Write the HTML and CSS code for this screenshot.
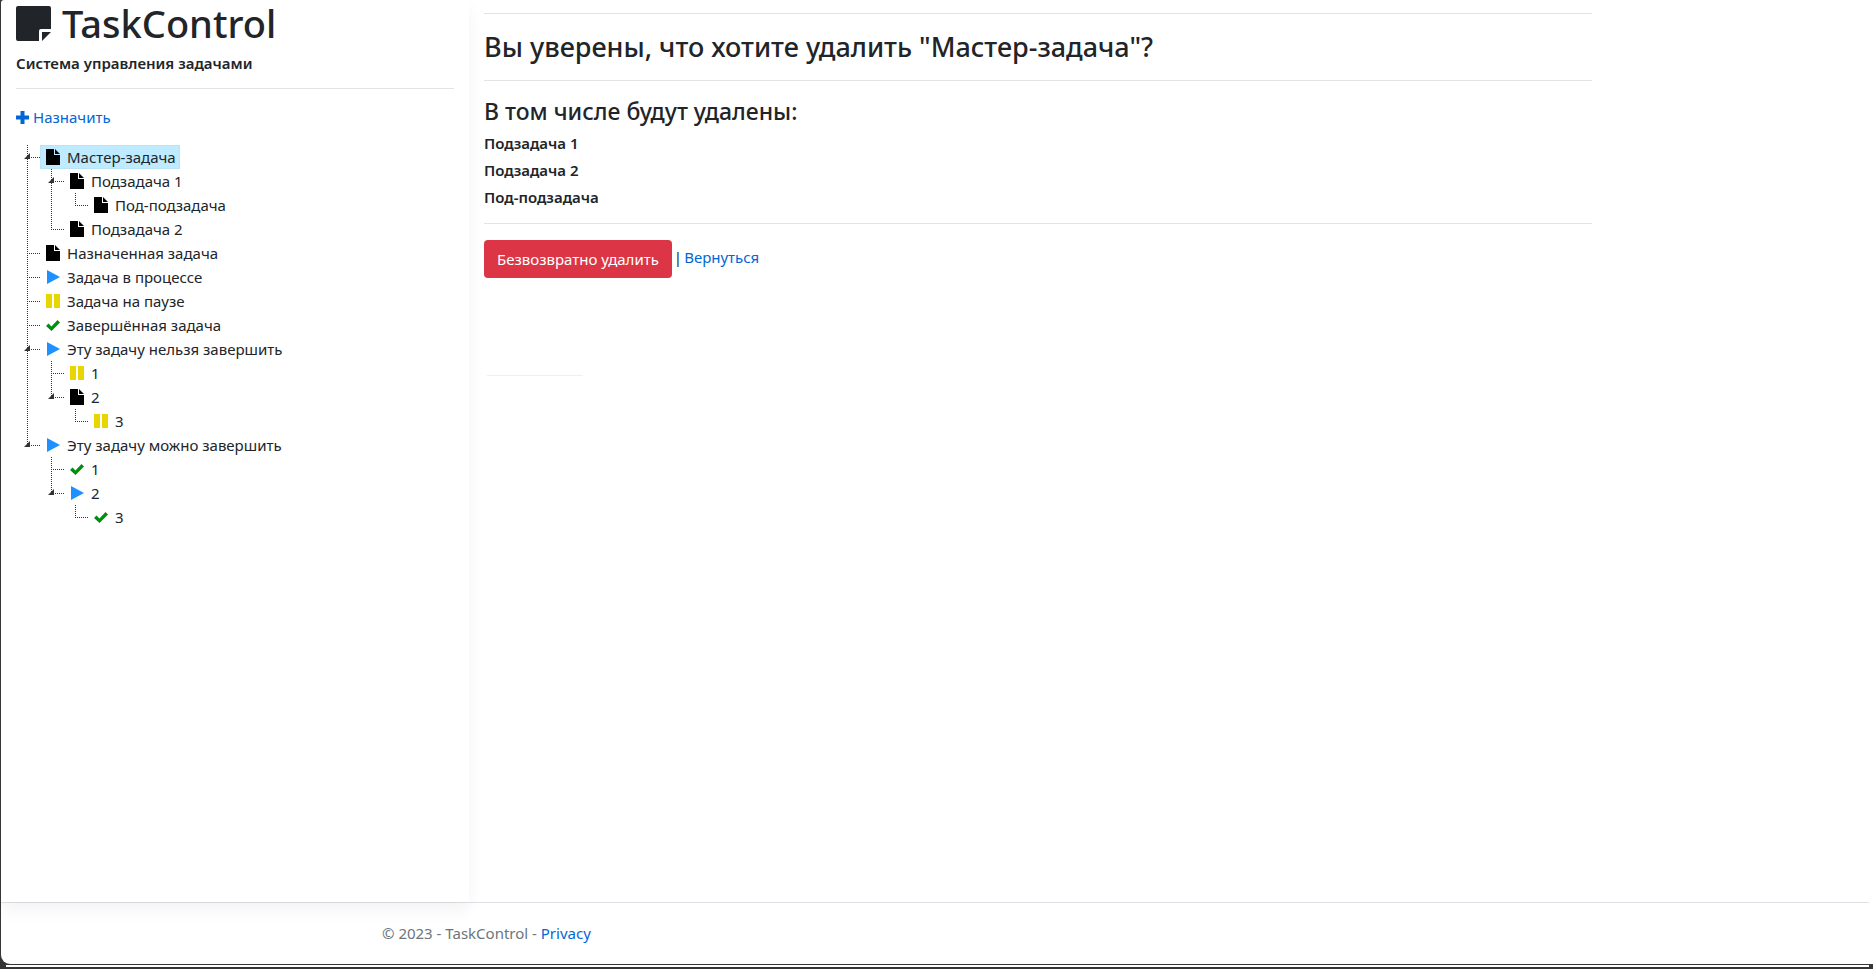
FILE: index.html
```html
<!DOCTYPE html>
<html lang="ru">
<head>
<meta charset="utf-8">
<title>TaskControl</title>
<link rel="stylesheet" href="styles.css">
</head>
<body>
<svg class="symbols" aria-hidden="true">
  <symbol id="file" viewBox="0 0 14 16"><path d="M0 0h8v6h6v10H0zM9 0l5 5H9z"/></symbol>
  <symbol id="play" viewBox="0 0 14 16"><path d="M1 1v14L14 8z"/></symbol>
  <symbol id="pause" viewBox="0 0 14 16"><path d="M0 1h6v14H0zM8 1h6v14H8z"/></symbol>
  <symbol id="check" viewBox="0 0 14 16"><path d="M0 9l2.500-2.500 3 2.900L11.500 3 14 5.500 5.500 14z"/></symbol>
</svg>
<div class="window">
  <div class="columns">
    <aside class="sidebar">
      <h1 class="brand">
        <svg class="brand-icon" viewBox="0 0 35 35" aria-hidden="true"><path d="M2 0h31a2 2 0 0 1 2 2v21H25a2 2 0 0 0-2 2v10H2a2 2 0 0 1-2-2V2a2 2 0 0 1 2-2z"/><path d="M26 26h9l-9 9z"/></svg>
        TaskControl
      </h1>
      <p class="tagline">Система управления задачами</p>
      <hr class="rule">
      <a class="link add" href="#"><svg class="add-icon" viewBox="0 0 13 13" aria-hidden="true"><path d="M4.500 0h4v4.500H13v4H8.500V13h-4V8.500H0v-4h4.500z"/></svg>Назначить</a>
      <ul class="tree">
        <li><button class="toggle" aria-label="Свернуть"></button><a class="node selected" href="#"><svg class="icon"><use href="#file"/></svg>Мастер-задача</a>
          <ul>
            <li><button class="toggle" aria-label="Свернуть"></button><a class="node" href="#"><svg class="icon"><use href="#file"/></svg>Подзадача 1</a>
              <ul>
                <li><a class="node" href="#"><svg class="icon"><use href="#file"/></svg>Под-подзадача</a></li>
              </ul>
            </li>
            <li><a class="node" href="#"><svg class="icon"><use href="#file"/></svg>Подзадача 2</a></li>
          </ul>
        </li>
        <li><a class="node" href="#"><svg class="icon"><use href="#file"/></svg>Назначенная задача</a></li>
        <li><a class="node" href="#"><svg class="icon play"><use href="#play"/></svg>Задача в процессе</a></li>
        <li><a class="node" href="#"><svg class="icon pause"><use href="#pause"/></svg>Задача на паузе</a></li>
        <li><a class="node" href="#"><svg class="icon check"><use href="#check"/></svg>Завершённая задача</a></li>
        <li><button class="toggle" aria-label="Свернуть"></button><a class="node" href="#"><svg class="icon play"><use href="#play"/></svg>Эту задачу нельзя завершить</a>
          <ul>
            <li><a class="node" href="#"><svg class="icon pause"><use href="#pause"/></svg>1</a></li>
            <li><button class="toggle" aria-label="Свернуть"></button><a class="node" href="#"><svg class="icon"><use href="#file"/></svg>2</a>
              <ul>
                <li><a class="node" href="#"><svg class="icon pause"><use href="#pause"/></svg>3</a></li>
              </ul>
            </li>
          </ul>
        </li>
        <li><button class="toggle" aria-label="Свернуть"></button><a class="node" href="#"><svg class="icon play"><use href="#play"/></svg>Эту задачу можно завершить</a>
          <ul>
            <li><a class="node" href="#"><svg class="icon check"><use href="#check"/></svg>1</a></li>
            <li><button class="toggle" aria-label="Свернуть"></button><a class="node" href="#"><svg class="icon play"><use href="#play"/></svg>2</a>
              <ul>
                <li><a class="node" href="#"><svg class="icon check"><use href="#check"/></svg>3</a></li>
              </ul>
            </li>
          </ul>
        </li>
      </ul>
    </aside>
    <main class="content">
      <hr class="rule">
      <h2 class="question">Вы уверены, что хотите удалить "Мастер-задача"?</h2>
      <hr class="rule">
      <h3 class="subtitle">В том числе будут удалены:</h3>
      <ul class="doomed">
        <li>Подзадача 1</li>
        <li>Подзадача 2</li>
        <li>Под-подзадача</li>
      </ul>
      <hr class="rule">
      <form class="actions">
        <button class="danger" type="button">Безвозвратно удалить</button>
        <span>|</span>
        <a class="link" href="#">Вернуться</a>
      </form>
      <div class="progress"></div>
    </main>
  </div>
  <footer class="footer">© 2023 - TaskControl - <a class="link" href="#">Privacy</a></footer>
</div>
<div class="edge"></div>
</body>
</html>
```
FILE: styles.css
```css
* {
  box-sizing: border-box;
}

body {
  margin: 0;
  min-height: 100vh;
  padding: 0 0 2px 1px;
  display: flex;
  flex-direction: column;
  background: #363636;
  color: #212529;
  font: 15px/24px "Noto Sans", "Open Sans", sans-serif;
}

ul {
  list-style: none;
  margin: 0;
  padding: 0;
}

.symbols {
  position: absolute;
  width: 0;
  height: 0;
}

.window {
  flex: 1;
  display: flex;
  flex-direction: column;
  background: #fff;
  border-radius: 3px 0 0 9px;
}

.edge {
  height: 2px;
  margin: 1px 4px 0 5px;
  background: #fff;
}

.columns {
  flex: 1;
  display: grid;
  grid-template-columns: 25% 1fr;
}

.sidebar {
  padding: 0 15px;
  box-shadow: 0 8px 16px rgba(0, 0, 0, 0.05);
  clip-path: inset(-4px -20px -30px 0);
}

.brand {
  display: flex;
  align-items: center;
  gap: 11px;
  margin: 0 0 8px;
  font-size: 38px;
  font-weight: 500;
  line-height: 46px;
}

.brand-icon {
  width: 35px;
  height: 35px;
  fill: #212529;
}

.tagline {
  margin: 0;
  font-weight: 600;
  line-height: 19px;
}

.rule {
  height: 1px;
  margin: 16px 0;
  border: 0;
  background: #e2e3e4;
}

.sidebar .rule {
  margin: 15px 0 16px;
}

.link {
  color: #0366d6;
  text-decoration: none;
}

.add {
  display: flex;
  align-items: center;
  gap: 4px;
}

.add-icon {
  width: 13px;
  height: 13px;
  fill: #0366d6;
}

.tree {
  margin-top: 16px;
}

.tree li {
  position: relative;
  padding-left: 24px;
  background:
    repeating-linear-gradient(90deg, #333 0 1px, transparent 1px 2px) 11px 12px / 13px 1px no-repeat,
    repeating-linear-gradient(#333 0 1px, transparent 1px 2px) 11px 0 / 1px 100% no-repeat;
}

.tree li:last-child {
  background-size: 13px 1px, 1px 12px;
}

.toggle {
  position: absolute;
  left: 8px;
  top: 8px;
  width: 6px;
  height: 6px;
  padding: 0;
  border: 0;
  background: #333;
  clip-path: polygon(100% 0, 100% 100%, 0 100%);
}

.node {
  display: flex;
  align-items: center;
  gap: 7px;
  width: fit-content;
  height: 24px;
  padding: 0 4px 0 6px;
  border-radius: 2px;
  color: #212529;
  text-decoration: none;
}

.selected {
  background: #beebff;
  box-shadow: inset 0 0 1px #999;
}

.icon {
  width: 14px;
  height: 16px;
  fill: #000;
}

.icon.play {
  fill: #1e90ff;
}

.icon.pause {
  fill: #e9d600;
}

.icon.check {
  fill: #008f0c;
}

.content {
  width: 80%;
  min-width: 0;
  padding: 13px 0 0 15px;
}

.content .rule:first-child {
  margin-top: 0;
}

.question {
  margin: 0;
  font-size: 27px;
  font-weight: 500;
  line-height: 34px;
}

.subtitle {
  margin: 0 0 8px;
  font-size: 23px;
  font-weight: 500;
  line-height: 29px;
}

.doomed {
  display: grid;
  gap: 8px;
  font-weight: 600;
  line-height: 19px;
}

.actions {
  display: flex;
  gap: 2px;
  align-items: flex-start;
  line-height: 35px;
}

.danger {
  height: 38px;
  padding: 0 13px;
  border: 0;
  border-radius: 4px;
  background: #dc3545;
  color: #fff;
  font: inherit;
}

.progress {
  width: 96px;
  height: 1px;
  margin: 97px 0 0 3px;
  background: #e6f3ff;
}

.footer {
  margin-right: 4px;
  padding: 18px 0 19px 381px;
  border-top: 1px solid #dee2e6;
  color: #6c757d;
}
```
